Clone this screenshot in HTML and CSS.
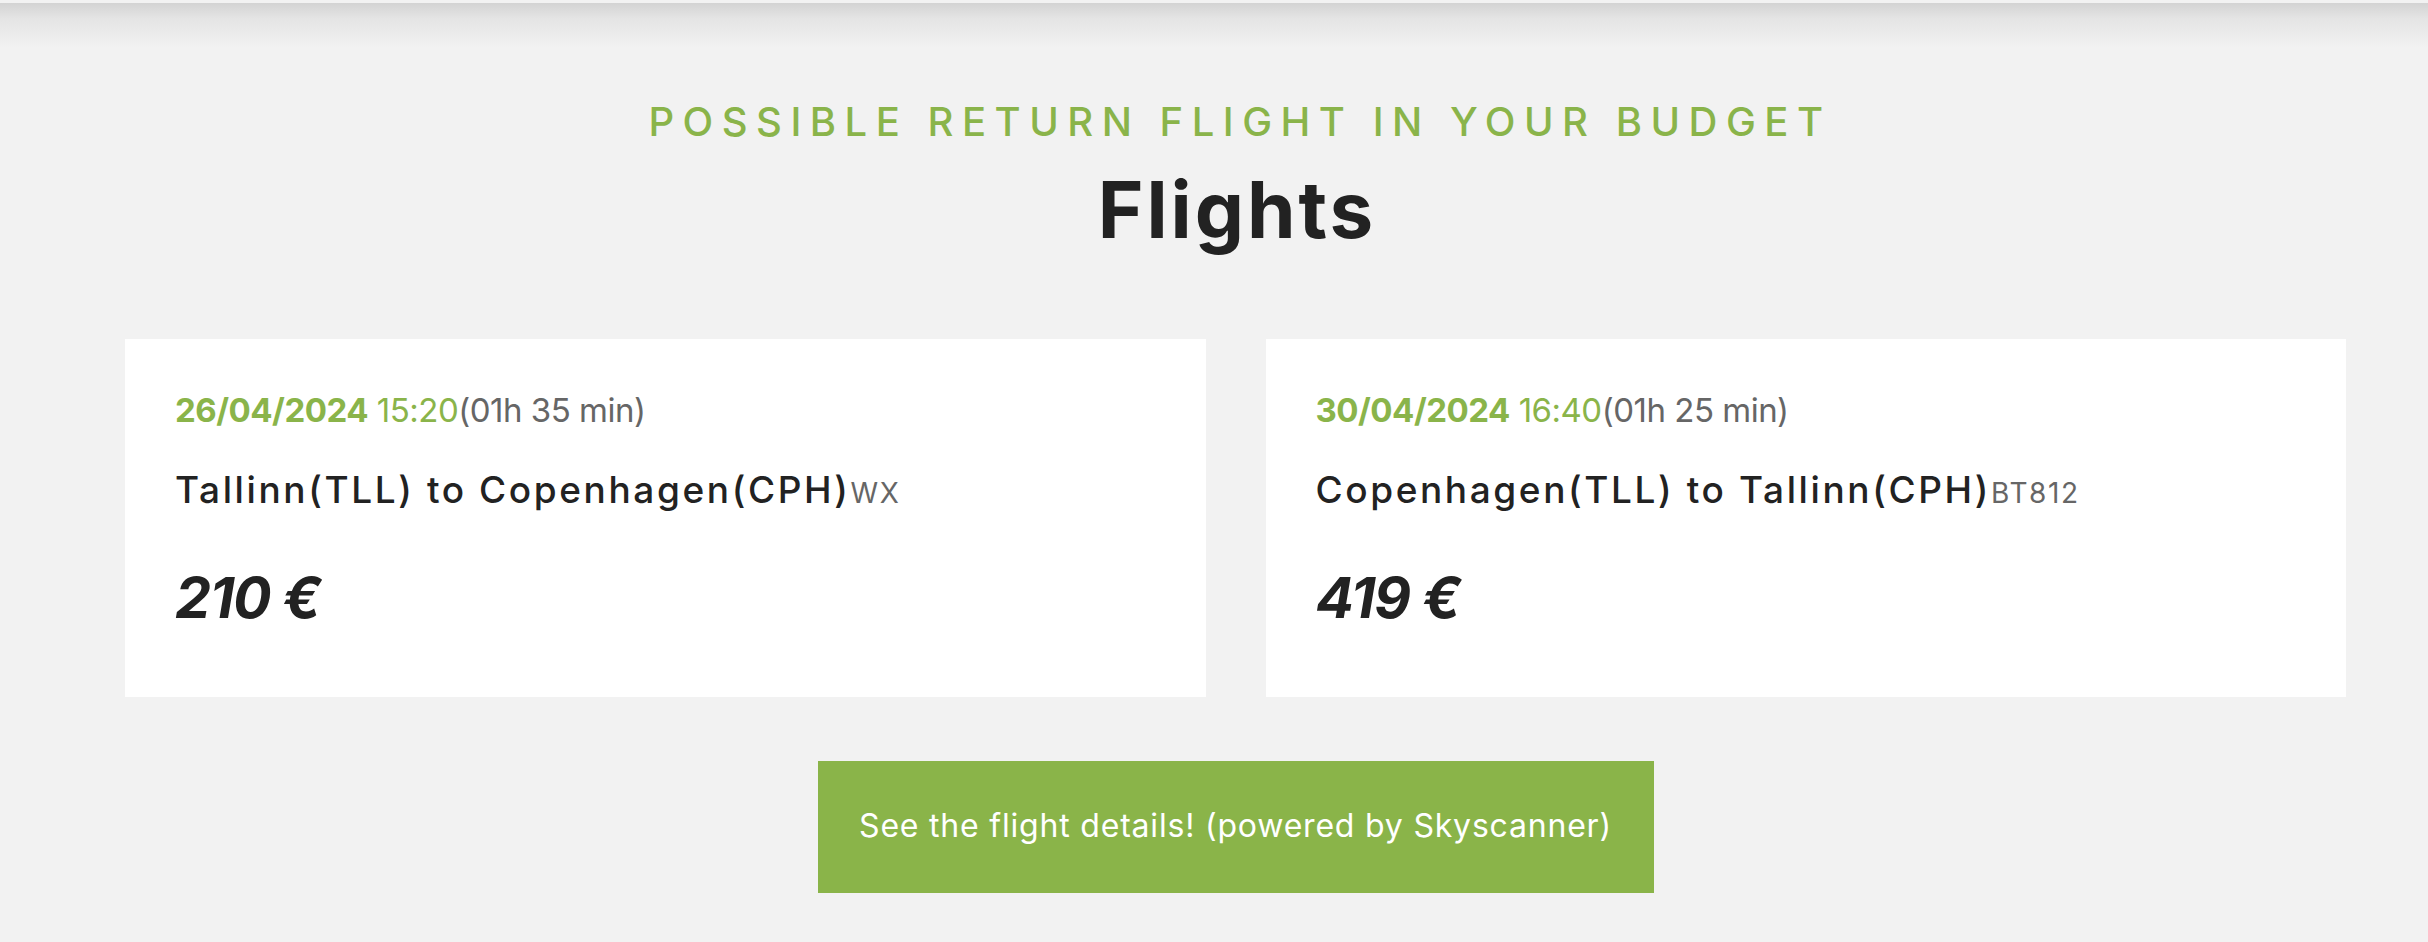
FILE: index.html
```html
<!DOCTYPE html>
<html lang="en">
<head>
<meta charset="utf-8">
<title>Flights</title>
<link rel="stylesheet" href="styles.css">
</head>
<body>
<section class="flights">
  <p class="eyebrow">Possible return flight in your budget</p>
  <h2 class="title">Flights</h2>
  <div class="cards">
    <article class="card">
      <p class="when"><strong class="date">26/04/2024</strong> <span class="time">15:20</span><span class="dur">(01h 35 min)</span></p>
      <p class="route">Tallinn(TLL) to Copenhagen(CPH)<span class="code">WX</span></p>
      <p class="price">210 €</p>
    </article>
    <article class="card">
      <p class="when"><strong class="date">30/04/2024</strong> <span class="time">16:40</span><span class="dur">(01h 25 min)</span></p>
      <p class="route">Copenhagen(TLL) to Tallinn(CPH)<span class="code">BT812</span></p>
      <p class="price">419 €</p>
    </article>
  </div>
  <div class="actions">
    <a class="btn" href="#">See the flight details! (powered by Skyscanner)</a>
  </div>
</section>
</body>
</html>
```
FILE: styles.css
```css
* { box-sizing: border-box; }
html, body { margin: 0; padding: 0; }
body {
  width: 2428px;
  min-height: 942px;
  font-family: Inter, "Noto Sans", "Liberation Sans", sans-serif;
  color: #222222;
  background:
    linear-gradient(to bottom, #f2f2f2 0, #f2f2f2 3px, #d3d3d3 3px, #e4e4e4 18px, #f2f2f2 48px) no-repeat,
    #f2f2f2;
  background-size: 100% 60px, auto;
}
.flights {
  padding: 102px 82px 0 125px;
}
.eyebrow {
  margin: 0;
  padding-left: 9px;
  text-align: center;
  font-size: 40px;
  line-height: 1;
  font-weight: 500;
  letter-spacing: 8.5px;
  text-transform: uppercase;
  color: #8ab44a;
}
.title {
  margin: 29px 0 0;
  padding-left: 3px;
  text-align: center;
  font-size: 78px;
  line-height: 1;
  font-weight: 700;
  letter-spacing: 3px;
  color: #222222;
}
.cards {
  margin-top: 90px;
  display: grid;
  grid-template-columns: 1fr 1fr;
  gap: 60px;
}
.card {
  background: #ffffff;
  height: 358px;
  padding: 55px 50px 0;
}
.card p { margin: 0; }
.when {
  font-size: 33px;
  line-height: 1;
  letter-spacing: -0.5px;
  color: #666666;
}
.date { font-weight: 700; color: #8ab44a; }
.time { color: #8ab44a; }
.route {
  margin-top: 44px !important;
  font-size: 37px;
  line-height: 1;
  font-weight: 500;
  letter-spacing: 2.6px;
  color: #222222;
}
.code {
  font-size: 28px;
  font-weight: 400;
  letter-spacing: 1.6px;
  color: #666666;
}
.price {
  margin-top: 61px !important;
  font-size: 57px;
  line-height: 1;
  font-weight: 700;
  font-style: italic;
  letter-spacing: -1.2px;
  color: #222222;
}
.actions {
  margin-top: 64px;
  display: flex;
  justify-content: center;
}
.btn {
  display: block;
  width: 836px;
  height: 132px;
  padding-top: 49px;
  text-align: center;
  background: #8ab449;
  color: #ffffff;
  font-size: 32px;
  line-height: 1;
  font-weight: 400;
  letter-spacing: 0.8px;
  text-decoration: none;
}
```
